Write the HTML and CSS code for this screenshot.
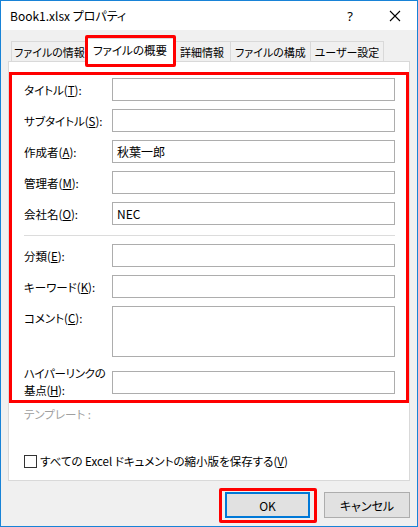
FILE: index.html
```html
<!DOCTYPE html>
<html lang="ja">
<head>
<meta charset="utf-8">
<link rel="stylesheet" href="styles.css">
</head>
<body>
<div class="window">
  <div class="titlebar">
    <span class="title">Book1.xlsx プロパティ</span>
    <span class="help">?</span>
    <span class="close"><svg width="12" height="12" viewBox="0 0 12 12"><path d="M1 1 L11 11 M11 1 L1 11" stroke="#000" stroke-width="1.1" fill="none"/></svg></span>
  </div>
  <div class="client">
    <div class="tabs">
      <div class="tab t1">ファイルの情報</div>
      <div class="tab sel">ファイルの概要</div>
      <div class="tab t3">詳細情報</div>
      <div class="tab t4">ファイルの構成</div>
      <div class="tab t5">ユーザー設定</div>
    </div>
    <div class="panel">
      <div class="group g1">
        <label class="lbl">タイトル(<u>T</u>):</label><div class="field"></div>
        <label class="lbl">サブタイトル(<u>S</u>):</label><div class="field"></div>
        <label class="lbl">作成者(<u>A</u>):</label><div class="field">秋葉一郎</div>
        <label class="lbl">管理者(<u>M</u>):</label><div class="field"></div>
        <label class="lbl">会社名(<u>O</u>):</label><div class="field">NEC</div>
      </div>
      <div class="sep"></div>
      <div class="group g2">
        <label class="lbl">分類(<u>E</u>):</label><div class="field"></div>
        <label class="lbl">キーワード(<u>K</u>):</label><div class="field"></div>
        <label class="lbl top">コメント(<u>C</u>):</label><div class="field tall"></div>
        <label class="lbl two"><span class="ln">ハイパーリンクの</span><span class="ln">基点(<u>H</u>):</span></label><div class="field hl"></div>
      </div>
      <div class="template">テンプレート :</div>
      <div class="check"><span class="box"></span><span>すべての Excel ドキュメントの縮小版を保存する(<u>V</u>)</span></div>
    </div>
    <div class="buttons">
      <div class="btn ok">OK</div>
      <div class="btn">キャンセル</div>
    </div>
  </div>
  <div class="mark mark-tab"></div>
  <div class="mark mark-form"></div>
  <div class="mark mark-ok"></div>
</div>
</body>
</html>
```
FILE: styles.css
```css
* { box-sizing: border-box; }
html, body { margin: 0; padding: 0; background: #fff; }
body {
  font-family: "Noto Sans CJK JP", "Noto Sans", sans-serif;
  font-size: 11.5px;
  color: #000;
  font-feature-settings: "palt";
}
.window {
  position: relative;
  width: 418px;
  height: 527px;
  border: 1px solid #1883d7;
  display: flex;
  flex-direction: column;
  background: #f0f0f0;
}
.titlebar {
  height: 29px;
  background: #fff;
  display: flex;
  align-items: center;
  padding-left: 9px;
  flex: none;
}
.title { flex: 1; font-size: 12px; }
.help { width: 20px; text-align: center; font-family: "Noto Sans", sans-serif; font-size: 13px; margin-right: 29px; }
.close { width: 12px; height: 12px; display: flex; margin-right: 16px; }
.client {
  flex: 1;
  padding: 0 7px;
  display: flex;
  flex-direction: column;
}
.tabs {
  display: flex;
  align-items: flex-end;
  height: 21px;
  margin-top: 10px;
  margin-left: 3px;
  position: relative;
  z-index: 1;
}
.tab {
  height: 20px;
  border: 1px solid #d9d9d9;
  border-bottom: none;
  background: #f0f0f0;
  display: flex;
  align-items: center;
  justify-content: center;
  margin-right: -1px;
  line-height: 1;
  padding-top: 1px;
  white-space: nowrap;
  font-size: 11px;
}
.t1 { width: 77px; }
.sel {
  width: 88px;
  height: 24px;
  margin-left: -1px;
  margin-right: -1px;
  background: #fff;
  margin-bottom: -1px;
  padding-top: 0;
  position: relative;
  font-size: 11.5px;
}
.t3 { width: 58px; }
.t4 { width: 81px; }
.t5 { width: 74px; }
.panel {
  height: 420px;
  background: #fff;
  border: 1px solid #d9d9d9;
  padding: 16px 14px 0 15px;
  display: flex;
  flex-direction: column;
}
.group {
  display: grid;
  grid-template-columns: 88px 1fr;
  align-items: center;
}
.g1 { row-gap: 8px; }
.g2 { row-gap: 8px; }
.lbl { line-height: 14px; white-space: nowrap; }
.lbl.top { align-self: start; padding-top: 5px; }
.lbl.two {
  align-self: end;
  display: flex;
  flex-direction: column;
  line-height: 17px;
  margin-bottom: -3px;
  letter-spacing: -0.3px;
}
.field {
  height: 23px;
  border: 1px solid #adadad;
  background: #fff;
  padding: 0 4px;
  display: flex;
  align-items: center;
  font-size: 12px;
}
.field.tall { height: 51px; }
.field.hl { margin-top: 4px; }
.sep {
  height: 1px;
  background: #dcdcdc;
  margin: 10px 0 8px;
}
.template {
  color: #a0a0a0;
  margin-top: 11px;
  line-height: 14px;
}
.check {
  margin-top: 32px;
  display: flex;
  align-items: center;
  gap: 3px;
}
.box {
  width: 13px;
  height: 13px;
  border: 1px solid #333;
  background: #fff;
  flex: none;
}
.buttons {
  display: flex;
  justify-content: flex-end;
  gap: 14px;
  margin-top: 11px;
}
.btn {
  width: 86px;
  height: 26px;
  border: 1px solid #adadad;
  background: #e1e1e1;
  display: flex;
  align-items: center;
  justify-content: center;
  font-size: 12px;
}
.btn.ok { width: 85px; border: 2px solid #0078d7; }
.mark {
  position: absolute;
  border: 3px solid #ff0000;
  pointer-events: none;
  z-index: 5;
}
.mark-tab { left: 84px; top: 34px; width: 91px; height: 32px; border-radius: 2px; }
.mark-form { left: 8px; top: 71px; width: 400px; height: 331px; }
.mark-ok { left: 218px; top: 487px; width: 98px; height: 35px; border-radius: 2px; }
```
